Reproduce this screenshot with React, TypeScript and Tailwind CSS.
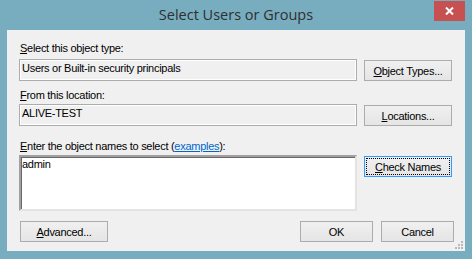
import type { ReactNode } from "react";

const ui = "font-['Liberation_Sans',Arial,sans-serif] text-[11px] leading-[13px] tracking-[-0.28px] text-black";

const Key = ({ children }: { children: ReactNode }) => <span className="underline underline-offset-[1px]">{children}</span>;

const Button = ({ children, width, focused }: { children: ReactNode; width: string; focused?: boolean }) => (
  <div
    className={`relative ${width} h-[21px] flex items-center justify-center bg-gradient-to-b from-[#f0f0f0] to-[#e5e5e5] border ${
      focused ? "border-[#3399ff]" : "border-[#acacac]"
    }`}
  >
    {focused && <div className="absolute inset-[1px] border border-dotted border-black" />}
    <span className="pt-[1px]">{children}</span>
  </div>
);

const ReadOnlyField = ({ value }: { value: string }) => (
  <div className="w-[338px] h-[22px] border border-[#acacac] shadow-[inset_0_0_0_1px_#ffffff] bg-[#f0f0f0] pl-[2px] pt-[2px]">
    {value}
  </div>
);

export default function App() {
  return (
    <div className="w-[472px] h-[259px] bg-[#78adc0] flex flex-col relative">
      {/* Title bar */}
      <div className="h-[30px] flex items-center justify-center">
        <span className="font-['Open_Sans',sans-serif] text-[14.5px] text-[#2f2f2f] -mt-[1px]">Select Users or Groups</span>
      </div>
      <div className="absolute top-[1px] left-[434px] w-[31px] h-[20px] bg-[#c75050] flex items-center justify-center">
        <svg width="9" height="8" viewBox="0 0 9 8">
          <path d="M1 0.5 L8 7.5 M8 0.5 L1 7.5" stroke="#ffffff" strokeWidth="2" />
        </svg>
      </div>

      {/* Client area */}
      <div className={`${ui} relative mx-[7px] h-[221px] bg-[#f0f0f0] pl-[12px] pr-[11px] flex flex-col`}>
        <div className="mt-[12px] pl-[1px]">
          <Key>S</Key>elect this object type:
        </div>
        <div className="mt-[4px] flex gap-[7px] items-start">
          <ReadOnlyField value="Users or Built-in security principals" />
          <div className="mt-[1px]">
            <Button width="w-[88px]">
              <Key>O</Key>bject Types...
            </Button>
          </div>
        </div>

        <div className="mt-[8px] pl-[1px]">
          <Key>F</Key>rom this location:
        </div>
        <div className="mt-[2px] flex gap-[7px] items-start">
          <ReadOnlyField value="ALIVE-TEST" />
          <div className="mt-[1px]">
            <Button width="w-[88px]">
              <Key>L</Key>ocations...
            </Button>
          </div>
        </div>

        <div className="mt-[14px] pl-[1px]">
          <Key>E</Key>nter the object names to select (
          <span className="text-[#0066cc] underline underline-offset-[1px]">examples</span>):
        </div>
        <div className="mt-[2px] flex gap-[7px] items-start">
          <div className="w-[338px] h-[56px] bg-white border-2 border-t-[#a0a0a0] border-l-[#a0a0a0] border-r-[#e3e3e3] border-b-[#e3e3e3] shadow-[inset_1px_1px_0_0_#696969] pl-[1px] pt-[1px]">
            admin
          </div>
          <div className="mt-[1px]">
            <Button width="w-[88px]" focused>
              <Key>C</Key>heck Names
            </Button>
          </div>
        </div>

        <div className="mt-[10px] flex items-start">
          <div className="ml-[1px]">
            <Button width="w-[88px]">
              <Key>A</Key>dvanced...
            </Button>
          </div>
          <div className="ml-auto flex gap-[8px]">
            <Button width="w-[73px]">OK</Button>
            <Button width="w-[73px]">Cancel</Button>
          </div>
        </div>

        {/* resize grip */}
        <svg className="absolute right-[2px] bottom-[2px]" width="9" height="9" viewBox="0 0 9 9">
          <rect x="7" y="1" width="2" height="2" fill="#b9b9b9" />
          <rect x="4" y="4" width="2" height="2" fill="#b9b9b9" />
          <rect x="7" y="4" width="2" height="2" fill="#b9b9b9" />
          <rect x="1" y="7" width="2" height="2" fill="#b9b9b9" />
          <rect x="4" y="7" width="2" height="2" fill="#b9b9b9" />
          <rect x="7" y="7" width="2" height="2" fill="#b9b9b9" />
        </svg>
      </div>
    </div>
  );
}
